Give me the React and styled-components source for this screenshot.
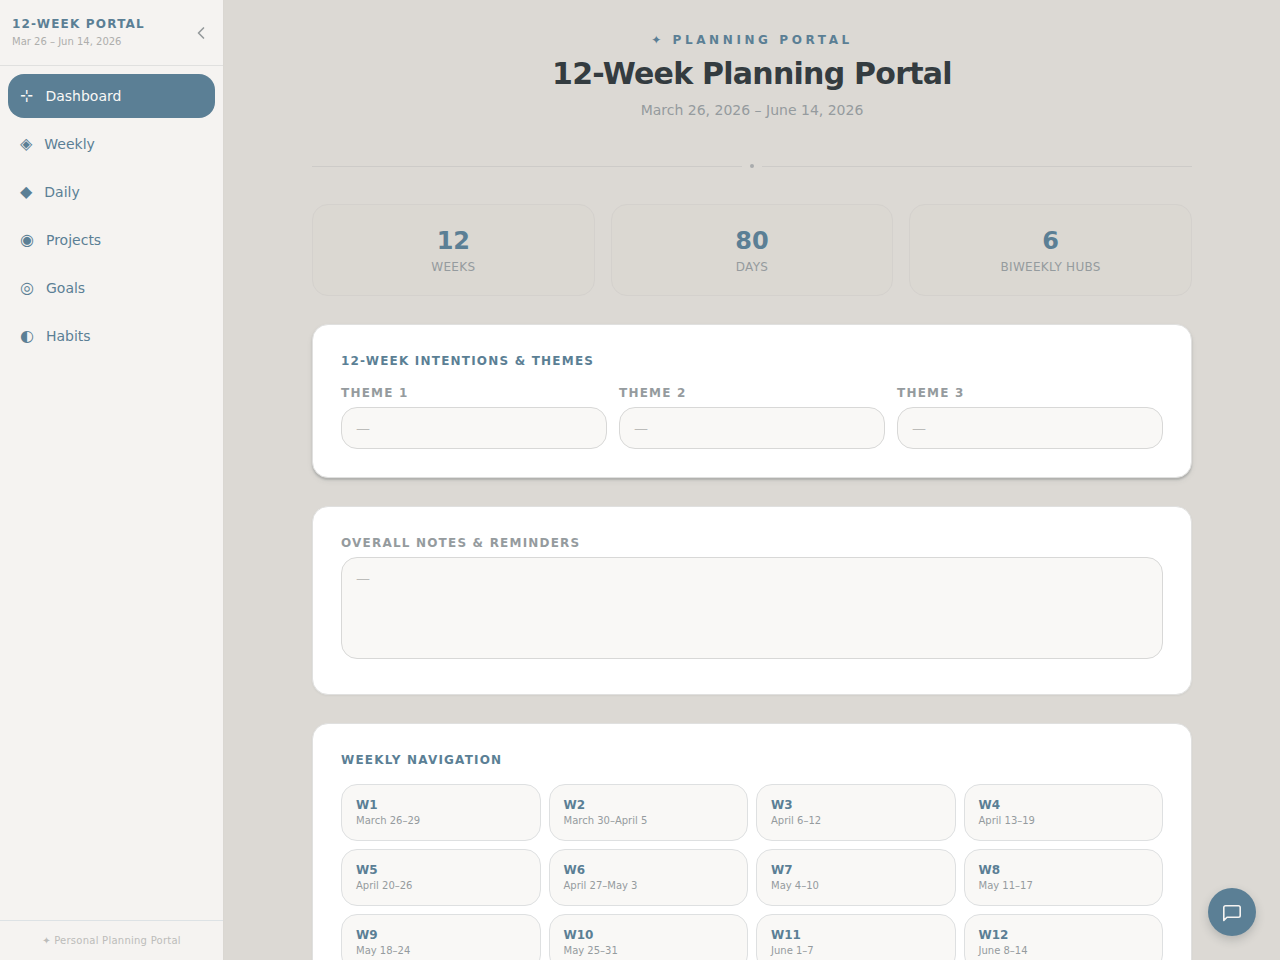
import styled, { createGlobalStyle } from 'styled-components';
import { useState } from 'react';
import { ChevronLeft } from 'lucide-react';


const GlobalStyle = createGlobalStyle`
    * {
        box-sizing: border-box;
    }
    body {
        margin: 0;
        font-family: "DejaVu Sans", sans-serif;
        font-size: 14px;
        line-height: 20px;
        color: #343c40;
        background: #dcd9d4;
    }
    button, input, textarea {
        font-family: inherit;
    }
`

const Layout = styled.div`
    display: flex;
    align-items: flex-start;
    min-height: 100vh;
`

const Sidebar = styled.aside`
    width: 224px;
    height: 100vh;
    flex-shrink: 0;
    position: sticky;
    top: 0;
    display: flex;
    flex-direction: column;
    background: #f5f3f1;
    border-right: 1px solid #dad7d2;
`

const SidebarHeader = styled.div`
    display: flex;
    align-items: center;
    justify-content: space-between;
    padding: 16px 12px;
    border-bottom: 1px solid #e0e0df;
`

const Brand = styled.div`
    color: #5b7f95;
    font-size: 12px;
    line-height: 16px;
    font-weight: 700;
    letter-spacing: 0.1em;
`

const BrandDates = styled.div`
    margin-top: 2px;
    color: #aeaeac;
    font-size: 10px;
    line-height: 15px;
`

const CollapseButton = styled.button`
    display: flex;
    padding: 0;
    border: 0;
    background: none;
    color: #949a9c;
    cursor: pointer;
`

const Nav = styled.nav`
    flex: 1;
    display: flex;
    flex-direction: column;
    gap: 4px;
    padding: 8px;
`

const NavButton = styled.button`
    display: flex;
    align-items: center;
    gap: 12px;
    height: 44px;
    padding: 0 12px;
    border: 0;
    border-radius: 16px;
    font-size: 14px;
    line-height: 20px;
    text-align: left;
    cursor: pointer;
    color: ${({ $active }) => $active ? '#f9f8f6' : '#5b7f95'};
    background: ${({ $active }) => $active ? '#5b7f95' : 'transparent'};
`

const NavIcon = styled.span`
    font-size: 16px;
    line-height: 24px;
`

const SidebarFooter = styled.div`
    padding: 12px;
    border-top: 1px solid #dde2e5;
    color: #bcbcba;
    font-size: 10px;
    line-height: 15px;
    letter-spacing: 0.025em;
    text-align: center;
`

const Main = styled.main`
    flex: 1;
    min-width: 0;
    padding: 32px;
`

const Content = styled.div`
    max-width: 880px;
    margin: 0 auto;
`

const Header = styled.header`
    padding-bottom: 44px;
    text-align: center;
`

const Eyebrow = styled.div`
    color: #5b7f95;
    font-size: 12px;
    line-height: 16px;
    font-weight: 700;
    letter-spacing: 0.3em;
`

const Title = styled.h1`
    margin: 8px 0;
    font-size: 30px;
    line-height: 36px;
    font-weight: 700;
    letter-spacing: -0.025em;
    color: #343c40;
`

const DateRange = styled.div`
    color: #959b9e;
`

const Divider = styled.div`
    display: flex;
    align-items: center;
    gap: 8px;
    margin-bottom: 36px;
    &::before, &::after {
        content: '';
        flex: 1;
        height: 1px;
        background: #cdcbc8;
    }
`

const Dot = styled.span`
    width: 4px;
    height: 4px;
    border-radius: 50%;
    background: #a9acad;
`

const Stats = styled.div`
    display: grid;
    grid-template-columns: repeat(3, 1fr);
    gap: 16px;
    margin-bottom: 28px;
`

const Stat = styled.div`
    padding: 20px;
    border: 1px solid #d4d1cd;
    border-radius: 16px;
    background: #dbd8d2;
    text-align: center;
`

const StatValue = styled.div`
    color: #5b7f95;
    font-size: 24px;
    line-height: 32px;
    font-weight: 700;
`

const StatLabel = styled.div`
    margin-top: 2px;
    color: #959b9e;
    font-size: 12px;
    line-height: 16px;
    letter-spacing: 0.025em;
`

const Card = styled.section`
    margin-bottom: 28px;
    padding: 28px;
    border: 1px solid #e0e0df;
    border-radius: 16px;
    background: #fff;
    box-shadow: ${({ $raised }) => $raised
        ? '0 2px 2px rgba(52, 60, 64, 0.22), 0 3px 6px rgba(52, 60, 64, 0.06)'
        : '0 1px 2px rgba(52, 60, 64, 0.06)'};
`

const CardTitle = styled.h2`
    margin: 0 0 16px;
    color: #5b7f95;
    font-size: 12px;
    line-height: 16px;
    font-weight: 700;
    letter-spacing: 0.1em;
`

const Themes = styled.div`
    display: grid;
    grid-template-columns: repeat(3, 1fr);
    gap: 12px;
`

const Label = styled.label`
    display: block;
    margin-bottom: 6px;
    color: #959b9e;
    font-size: 12px;
    line-height: 16px;
    font-weight: 700;
    letter-spacing: 0.1em;
`

const Input = styled.input`
    display: block;
    width: 100%;
    padding: 10px 14px;
    border: 1px solid #d8d8d7;
    border-radius: 16px;
    background: #f9f8f6;
    color: #343c40;
    font-size: 14px;
    line-height: 20px;
    height: 42px;
    outline: none;
    &::placeholder {
        color: #bcbcba;
    }
`

const TextArea = styled(Input)`
    height: auto;
    margin-bottom: 7px;
    resize: none;
`

const Weeks = styled.div`
    display: grid;
    grid-template-columns: repeat(4, 1fr);
    gap: 8px;
`

const WeekButton = styled.button`
    padding: 12px 14px;
    border: 1px solid #dee0e1;
    border-radius: 16px;
    background: #f9f8f6;
    text-align: left;
    cursor: pointer;
`

const WeekName = styled.div`
    color: #5b7f95;
    font-size: 12px;
    line-height: 16px;
    font-weight: 700;
`

const WeekDates = styled.div`
    color: #959b9e;
    font-size: 10px;
    line-height: 15px;
`

const ChatButton = styled.button`
    position: fixed;
    right: 24px;
    bottom: 24px;
    width: 48px;
    height: 48px;
    display: flex;
    align-items: center;
    justify-content: center;
    padding: 0;
    border: 0;
    border-radius: 50%;
    background: #5b7f95;
    color: #f5f3f1;
    box-shadow: 0 4px 10px rgba(52, 60, 64, 0.22);
    cursor: pointer;
`

const pages = [
    { icon: '⊹', name: 'Dashboard' },
    { icon: '◈', name: 'Weekly' },
    { icon: '◆', name: 'Daily' },
    { icon: '◉', name: 'Projects' },
    { icon: '◎', name: 'Goals' },
    { icon: '◐', name: 'Habits' },
]

const stats = [
    { value: 12, label: 'WEEKS' },
    { value: 80, label: 'DAYS' },
    { value: 6, label: 'BIWEEKLY HUBS' },
]

const weeks = [
    'March 26–29',
    'March 30–April 5',
    'April 6–12',
    'April 13–19',
    'April 20–26',
    'April 27–May 3',
    'May 4–10',
    'May 11–17',
    'May 18–24',
    'May 25–31',
    'June 1–7',
    'June 8–14',
]

function ChatIcon(){
    return (
        <svg width="20" height="20" viewBox="0 0 20 20" fill="none" stroke="currentColor" strokeWidth="1.6" strokeLinecap="round" strokeLinejoin="round">
            <path d="M18.2 13.6a1.7 1.7 0 0 1-1.7 1.7H5L1.8 18.4V5.5a1.7 1.7 0 0 1 1.7-1.7h13a1.7 1.7 0 0 1 1.7 1.7z" />
        </svg>
    )
}

function App(){
    const [page, setPage] = useState('Dashboard');
    return (
        <Layout>
            <GlobalStyle />
            <Sidebar>
                <SidebarHeader>
                    <div>
                        <Brand>12-WEEK PORTAL</Brand>
                        <BrandDates>Mar 26 – Jun 14, 2026</BrandDates>
                    </div>
                    <CollapseButton type="button" aria-label="Collapse sidebar">
                        <ChevronLeft size={20} strokeWidth={2} />
                    </CollapseButton>
                </SidebarHeader>
                <Nav>
                    {pages.map(({ icon, name }) => (
                        <NavButton key={name} type="button" $active={page === name} onClick={() => setPage(name)}>
                            <NavIcon>{icon}</NavIcon>
                            <span>{name}</span>
                        </NavButton>
                    ))}
                </Nav>
                <SidebarFooter>✦ Personal Planning Portal</SidebarFooter>
            </Sidebar>
            <Main>
                <Content>
                    <Header>
                        <Eyebrow>✦ PLANNING PORTAL</Eyebrow>
                        <Title>12-Week Planning Portal</Title>
                        <DateRange>March 26, 2026 – June 14, 2026</DateRange>
                    </Header>
                    <Divider><Dot /></Divider>
                    <Stats>
                        {stats.map(({ value, label }) => (
                            <Stat key={label}>
                                <StatValue>{value}</StatValue>
                                <StatLabel>{label}</StatLabel>
                            </Stat>
                        ))}
                    </Stats>
                    <Card $raised>
                        <CardTitle>12-WEEK INTENTIONS &amp; THEMES</CardTitle>
                        <Themes>
                            {[1, 2, 3].map((n) => (
                                <div key={n}>
                                    <Label htmlFor={`theme-${n}`}>THEME {n}</Label>
                                    <Input id={`theme-${n}`} placeholder="—" />
                                </div>
                            ))}
                        </Themes>
                    </Card>
                    <Card>
                        <Label htmlFor="notes">OVERALL NOTES &amp; REMINDERS</Label>
                        <TextArea as="textarea" id="notes" rows={4} placeholder="—" />
                    </Card>
                    <Card>
                        <CardTitle>WEEKLY NAVIGATION</CardTitle>
                        <Weeks>
                            {weeks.map((dates, i) => (
                                <WeekButton key={dates} type="button">
                                    <WeekName>W{i + 1}</WeekName>
                                    <WeekDates>{dates}</WeekDates>
                                </WeekButton>
                            ))}
                        </Weeks>
                    </Card>
                </Content>
            </Main>
            <ChatButton type="button" aria-label="Open chat">
                <ChatIcon />
            </ChatButton>
        </Layout>
    )
}

export default App;
